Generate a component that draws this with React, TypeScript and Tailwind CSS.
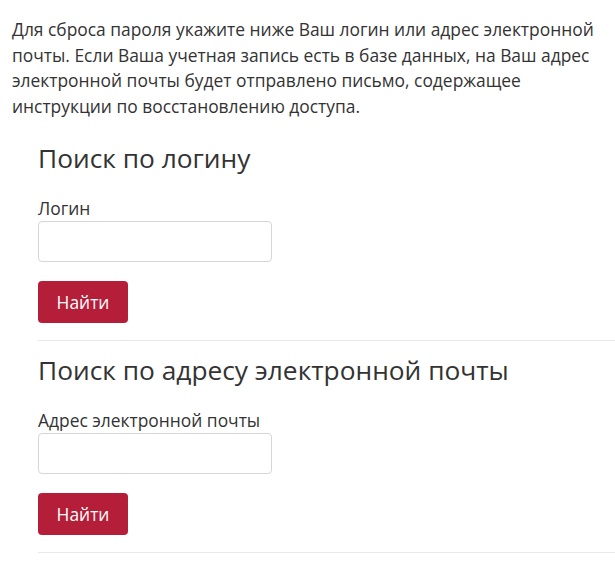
import React from "react";

type SearchBlockProps = {
  title: string;
  label: string;
  id: string;
};

const SearchBlock: React.FC<SearchBlockProps> = ({ title, label, id }) => {
  return (
    <div className="border-b border-[#e8e8e8] pb-[17px]">
      <h3 className="text-[26.3px] leading-[1.2] font-normal text-[#333]">{title}</h3>
      <div className="mt-[21px]">
        <label htmlFor={id} className="block text-[17.4px] leading-[25.5px] text-[#333]">
          {label}
        </label>
        <input
          id={id}
          type="text"
          className="block w-[234px] h-[41px] rounded-[4px] border border-[#d6d6d6] bg-white px-3 text-[17px] outline-none"
        />
      </div>
      <button
        type="button"
        className="mt-[19px] h-[42px] w-[90px] rounded-[4px] bg-[#b41e38] text-[17.4px] text-white"
      >
        Найти
      </button>
    </div>
  );
};

export default function App() {
  return (
    <div
      className="min-h-[579px] bg-white pl-[12px] pt-[17px] text-[#333]"
      style={{ fontFamily: '"Open Sans", "Noto Sans", sans-serif' }}
    >
      <p className="text-[17.4px] leading-[25.5px]">
        Для сброса пароля укажите ниже Ваш логин или адрес электронной почты. Если Ваша учетная
        запись есть в базе данных, на Ваш адрес электронной почты будет отправлено письмо,
        содержащее инструкции по восстановлению доступа.
      </p>
      <div className="ml-[26px] mt-[24px]">
        <SearchBlock title="Поиск по логину" label="Логин" id="login" />
        <div className="mt-[14px]">
          <SearchBlock
            title="Поиск по адресу электронной почты"
            label="Адрес электронной почты"
            id="email"
          />
        </div>
      </div>
    </div>
  );
}
